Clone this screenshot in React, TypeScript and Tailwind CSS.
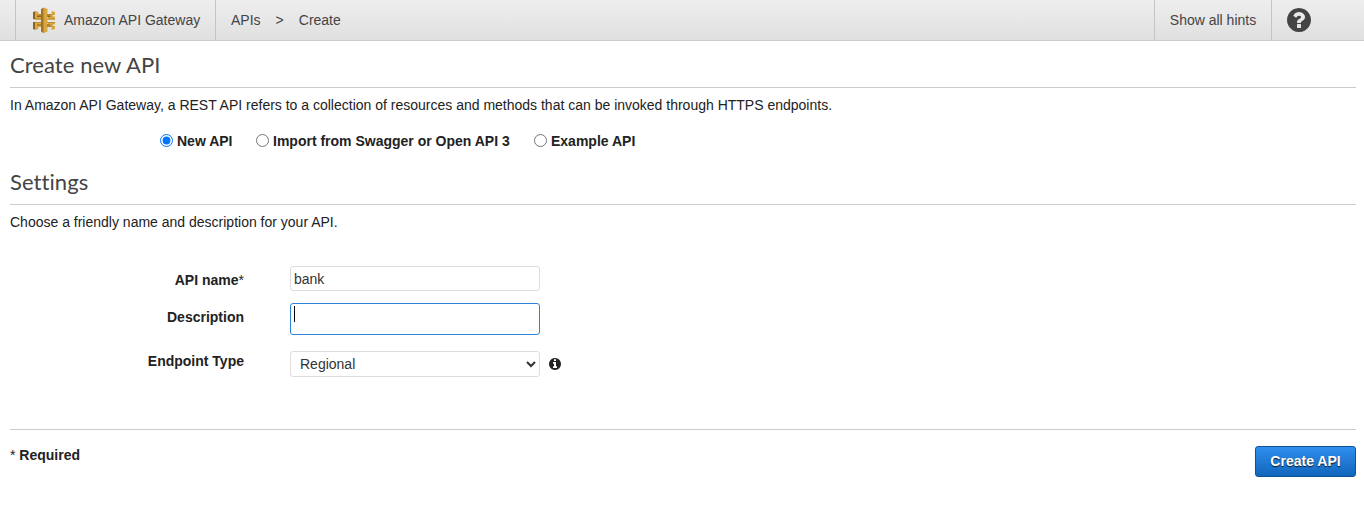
import React from "react";

function InfoIcon({ className }: { className?: string }) {
  return (
    <svg viewBox="128 128 1536 1536" className={className} fill="currentColor">
      <path d="M1152 1376v-160q0-14-9-23t-23-9h-96v-512q0-14-9-23t-23-9h-320q-14 0-23 9t-9 23v160q0 14 9 23t23 9h96v320h-96q-14 0-23 9t-9 23v160q0 14 9 23t23 9h448q14 0 23-9t9-23zm-128-896v-160q0-14-9-23t-23-9h-192q-14 0-23 9t-9 23v160q0 14 9 23t23 9h192q14 0 23-9t9-23zm640 416q0 209-103 385.5t-279.5 279.5-385.5 103-385.5-103-279.5-279.5-103-385.5 103-385.5 279.5-279.5 385.5-103 385.5 103 279.5 279.5 103 385.5z" />
    </svg>
  );
}

function HelpIcon({ className }: { className?: string }) {
  return (
    <svg viewBox="128 128 1536 1536" className={className} fill="currentColor">
      <path d="M1024 1376v-192q0-14-9-23t-23-9h-192q-14 0-23 9t-9 23v192q0 14 9 23t23 9h192q14 0 23-9t9-23zm256-672q0-88-55.5-163t-138.5-116-170-41q-243 0-371 213-15 24 8 42l132 100q7 6 19 6 16 0 25-12 53-68 86-92 34-24 86-24 48 0 85.5 26t37.5 59q0 38-20 61t-68 45q-63 28-115.5 86.5t-52.5 125.5v36q0 14 9 23t23 9h192q14 0 23-9t9-23q0-19 21.5-49.5t54.5-49.5q32-18 49-28.5t46-35 44.5-48 28-60.5 12.5-81zm384 192q0 209-103 385.5t-279.5 279.5-385.5 103-385.5-103-279.5-279.5-103-385.5 103-385.5 279.5-279.5 385.5-103 385.5 103 279.5 279.5 103 385.5z" />
    </svg>
  );
}

function GatewayLogo() {
  return (
    <svg viewBox="0 0 24 26" className="h-[26px] w-6 shrink-0">
      {/* shaded sides of the arms */}
      <path fill="#8b6420" d="M1 5l2.500-1v8.500l-2.500-.5zM1 15h2.500v8l-2.500-1zM5 7h4v3h-4zM5 17h4v3h-4zM15 7h5v3h-5zM15 17h5v3h-5z" />
      {/* front faces of the arms */}
      <path fill="#d9a741" d="M3 4l3.500 1v2.500h2.500v1h-4v1.500h4v2.500h-6zM3 15h6v2.500h-4v1h4v1.500h-2.500v2l-3.500 1z" />
      <path fill="#d9a741" d="M23 5l-3.500-1v3.500h-3.500v1h2.500v1.500h-2.500v2.500h7v-3h-2v-1.500h2zM23 22l-3.500 1v-3.500h-3.500v-1h2.500v-1h-2.500v-2.500h7v2.500h-2v1.500h2z" />
      <path fill="#b98428" d="M3 11.500h6v1h-6zM15 11.500h8v1h-8zM3 15h6v.7h-6zM15 15h8v.7h-8z" />
      {/* centre column */}
      <path fill="#a47424" d="M9 2l3-1.500v26l-3-2z" />
      <path fill="#d9a741" d="M11.500 .5l4 1.500v22.500l-4 1.500z" />
    </svg>
  );
}

function Heading({ children }: { children: React.ReactNode }) {
  return (
    <h2 className="h-[37px] border-b border-[#ccc] pt-[3px] font-[Lato,sans-serif] text-[22px] leading-[22px] tracking-[0.07px] text-[#444] [font-variant-ligatures:none]">
      {children}
    </h2>
  );
}

function Choice({ label, checked }: { label: string; checked?: boolean }) {
  return (
    <label className="flex items-start gap-1 font-bold">
      <input type="radio" name="source" defaultChecked={checked} className="mt-[3px] h-[13px] w-[13px]" />
      <span className="leading-5">{label}</span>
    </label>
  );
}

export default function App() {
  return (
    <div className="h-[529px] overflow-hidden bg-white font-['Liberation_Sans',Arial,sans-serif] text-sm leading-5 text-[#222]">
      <header className="flex h-[41px] border-b border-[#ccc] bg-linear-to-b from-[#eee] to-[#e0e0e0] pl-[15px] text-[#444]">
        <div className="flex w-[201px] items-center gap-2 border-x border-[#c4c4c4] pl-4">
          <GatewayLogo />
          <span>Amazon API Gateway</span>
        </div>
        <nav className="flex flex-1 items-center gap-[15px] pl-[15px]">
          <span>APIs</span>
          <span>&gt;</span>
          <span>Create</span>
        </nav>
        <div className="flex w-[118px] items-center justify-center border-x border-[#c4c4c4]">Show all hints</div>
        <div className="flex w-[92px] items-center pl-[15px]">
          <HelpIcon className="h-6 w-6" />
        </div>
      </header>

      <main className="pt-[10px] pr-2 pl-[10px]">
        <section className="h-[117px]">
          <Heading>Create new API</Heading>
          <p className="mt-[7px]">
            In Amazon API Gateway, a REST API refers to a collection of resources and methods that can be invoked
            through HTTPS endpoints.
          </p>
          <div className="mt-4 flex pl-[150px]">
            <div className="w-24"><Choice label="New API" checked /></div>
            <div className="w-[278px]"><Choice label="Import from Swagger or Open API 3" /></div>
            <Choice label="Example API" />
          </div>
        </section>

        <section>
          <Heading>Settings</Heading>
          <p className="mt-[7px]">Choose a friendly name and description for your API.</p>
          <form className="mt-[34px] h-[164px] border-b border-[#ccc]">
            <div className="flex h-[37px] gap-[46px]">
              <label className="w-[234px] pt-1 text-right font-bold">
                API name<span className="font-normal">*</span>
              </label>
              <input
                defaultValue="bank"
                className="h-[25px] w-[250px] rounded-[3px] border border-[#ddd] px-[3px] text-[#333]"
              />
            </div>
            <div className="flex h-12 gap-[46px]">
              <label className="w-[234px] pt-1 text-right font-bold">Description</label>
              <div className="h-8 w-[250px] rounded-[3px] border border-[#2e85d8] pt-0.5 pl-[3px]">
                <div className="h-4 w-px bg-black" />
              </div>
            </div>
            <div className="flex">
              <label className="mr-[46px] w-[234px] text-right font-bold">Endpoint Type</label>
              <select className="h-[26px] w-[250px] rounded-[3px] border border-[#ddd] bg-white pr-px pl-[5px] text-[#333]">
                <option>Regional</option>
              </select>
              <InfoIcon className="mt-[7px] ml-[9px] h-3 w-3" />
            </div>
          </form>
        </section>

        <footer className="flex items-start justify-between pt-4">
          <p className="-mt-px font-bold">
            <span className="font-normal">*</span> Required
          </p>
          <button className="h-[31px] w-[101px] rounded-[3px] border border-[#0f5197] bg-linear-to-b from-[#2f8eee] to-[#1166bb] pb-0.5 font-bold text-white [text-shadow:0_1px_1px_rgba(0,0,0,0.8)]">
            Create API
          </button>
        </footer>
      </main>
    </div>
  );
}
